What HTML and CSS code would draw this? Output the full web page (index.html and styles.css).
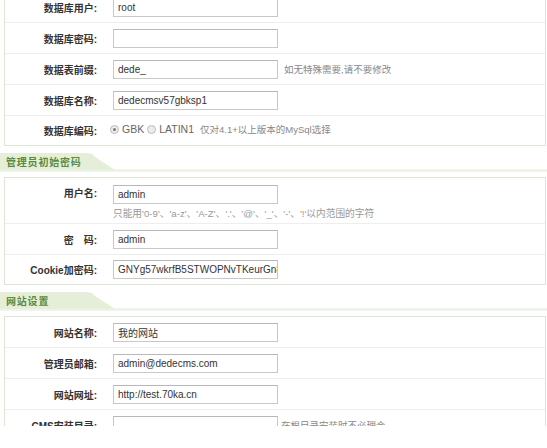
FILE: index.html
```html
<!DOCTYPE html>
<html lang="zh-CN">
<head>
<meta charset="utf-8">
<title>安装设置</title>
<link rel="stylesheet" href="styles.css">
</head>
<body>
<div class="page">
  <div class="box box-first">
    <div class="row"><div class="label">数据库用户:</div><div class="field"><input class="inp" value="root"></div></div>
    <div class="row"><div class="label">数据库密码:</div><div class="field"><input class="inp" value=""></div></div>
    <div class="row"><div class="label">数据表前缀:</div><div class="field"><input class="inp" value="dede_"><span class="hint">如无特殊需要,请不要修改</span></div></div>
    <div class="row"><div class="label">数据库名称:</div><div class="field"><input class="inp" value="dedecmsv57gbksp1"></div></div>
    <div class="row row-last"><div class="label">数据库编码:</div><div class="field radios"><span class="radio checked"></span><span class="rtext">GBK</span><span class="radio"></span><span class="rtext">LATIN1</span><span class="hint hint-r">仅对4.1+以上版本的MySql选择</span></div></div>
  </div>

  <div class="sec"><span class="sec-tab">管理员初始密码</span></div>
  <div class="box">
    <div class="row row-tall"><div class="label">用户名:</div><div class="field field-col"><input class="inp" value="admin"><div class="help">只能用'0-9'、'a-z'、'A-Z'、'.'、'@'、'_'、'-'、'!'以内范围的字符</div></div></div>
    <div class="row"><div class="label">密　码:</div><div class="field"><input class="inp" value="admin"></div></div>
    <div class="row row-last"><div class="label">Cookie加密码:</div><div class="field"><input class="inp" value="GNYg57wkrfB5STWOPNvTKeurGn8q"></div></div>
  </div>

  <div class="sec"><span class="sec-tab">网站设置</span></div>
  <div class="box">
    <div class="row"><div class="label">网站名称:</div><div class="field"><input class="inp" value="我的网站"></div></div>
    <div class="row"><div class="label">管理员邮箱:</div><div class="field"><input class="inp" value="admin@dedecms.com"></div></div>
    <div class="row"><div class="label">网站网址:</div><div class="field"><input class="inp" value="http://test.70ka.cn"></div></div>
    <div class="row"><div class="label">CMS安装目录:</div><div class="field"><input class="inp" value=""><span class="hint hint-near">在根目录安装时不必理会</span></div></div>
  </div>
</div>
</body>
</html>
```

FILE: styles.css
```css
html, body {
  margin: 0;
  padding: 0;
  background: #fff;
}

body {
  font-family: "Liberation Sans", "Noto Sans CJK SC", sans-serif;
  font-size: 10px;
  color: #333;
}

.page {
  height: 426px;
  overflow: hidden;
  width: 547px;
}

.box {
  margin: 0 1px 0 4px;
  border: 1px solid #dde6d4;
  background: #fff;
}

.box-first {
  margin-top: -9px;
}

.row {
  display: flex;
  align-items: center;
  height: 30px;
  border-bottom: 1px solid #eeeeee;
}

.row-last {
  border-bottom: none;
  height: 29px;
}

.row-tall {
  height: 45px;
  align-items: flex-start;
}

.row-tall .label {
  margin-top: 7px;
  line-height: 17px;
}

.label {
  width: 92px;
  flex: none;
  text-align: right;
  font-family: "Liberation Sans", "Noto Sans CJK SC", sans-serif;
  font-weight: bold;
  font-size: 10px;
  color: #333;
  white-space: nowrap;
  margin-right: 16px;
}

.field {
  display: flex;
  align-items: center;
}

.field-col {
  flex-direction: column;
  align-items: flex-start;
  padding-top: 7px;
}

.inp {
  box-sizing: border-box;
  width: 165px;
  height: 19px;
  margin: 0;
  padding: 0 0 0 4px;
  border: 1px solid #c8c8c8;
  border-top-color: #b8b8b8;
  background: #fff;
  font-family: "Liberation Sans", "Noto Sans CJK SC", sans-serif;
  font-size: 10px;
  color: #333;
  outline: none;
}

.hint {
  margin-left: 6px;
  font-family: "Liberation Sans", "Noto Sans CJK SC", sans-serif;
  font-size: 9.5px;
  color: #888;
  white-space: nowrap;
}

.hint-near {
  margin-left: 3px;
}

.hint-r {
  margin-left: 3px;
}

.help {
  margin-top: 2px;
  font-family: "Liberation Sans", "Noto Sans CJK SC", sans-serif;
  font-size: 9.7px;
  color: #999;
  white-space: nowrap;
}

.radios {
  margin-left: -3px;
  margin-top: -3px;
}

.radio {
  box-sizing: border-box;
  width: 9px;
  height: 9px;
  border-radius: 50%;
  border: 1px solid #bbb;
  background: #ececec;
  position: relative;
  margin-right: 3px;
}

.radio.checked::after {
  content: "";
  position: absolute;
  left: 2px;
  top: 2px;
  width: 3px;
  height: 3px;
  border-radius: 50%;
  background: #777;
}

.rtext {
  font-size: 10.5px;
  color: #666;
  margin-right: 3px;
  font-family: "Liberation Sans", sans-serif;
}

.sec {
  margin-top: 7px;
  height: 16px;
  border-bottom: 3px solid #eef4e7;
  margin-bottom: 5px;
}

.sec-tab {
  display: block;
  width: 115px;
  height: 17px;
  box-sizing: border-box;
  padding-left: 6px;
  line-height: 17px;
  background: #e5eed8;
  clip-path: polygon(0 0, 88px 0, 92px 1px, 95px 4px, 115px 17px, 0 17px);
  font-family: "Noto Sans CJK SC", "Liberation Sans", sans-serif;
  font-weight: bold;
  font-size: 10px;
  letter-spacing: 0.8px;
  color: #5b8a3c;
}
```
